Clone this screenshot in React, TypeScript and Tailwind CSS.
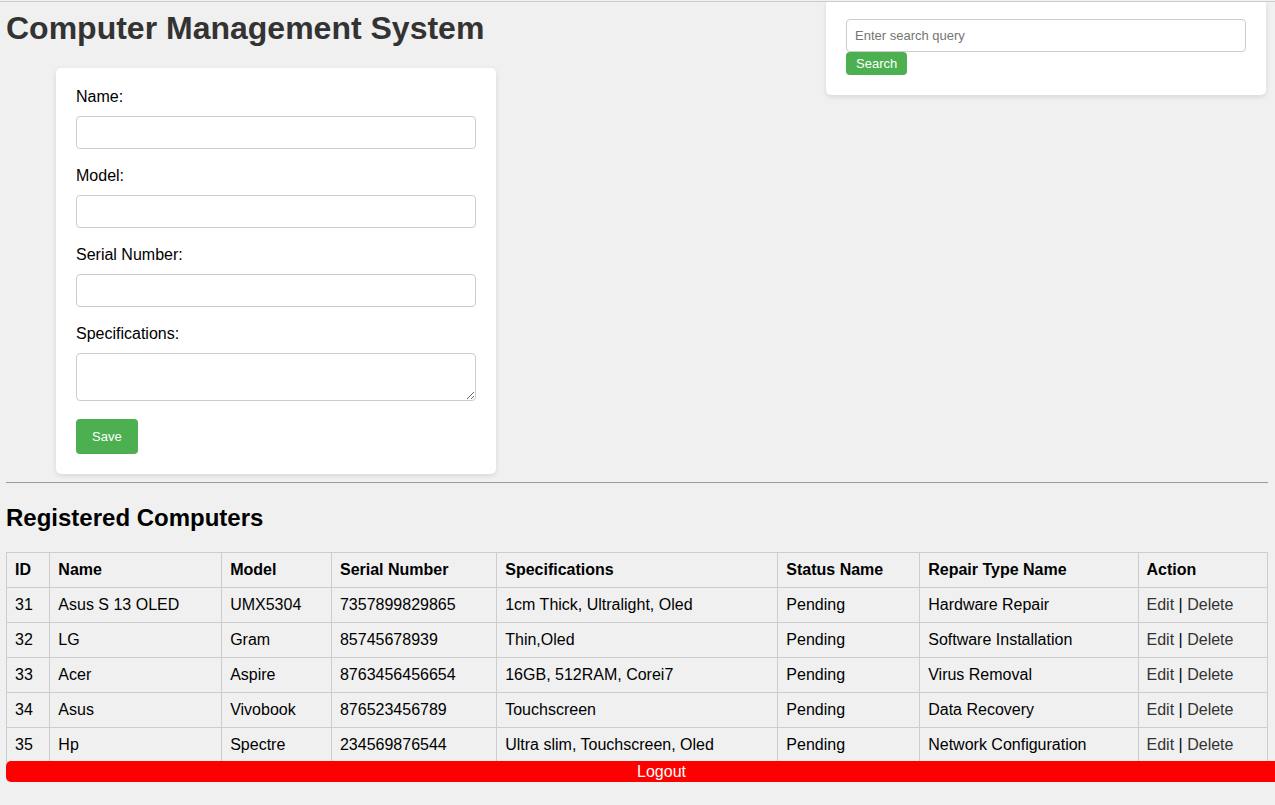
const columns = [
  "ID",
  "Name",
  "Model",
  "Serial Number",
  "Specifications",
  "Status Name",
  "Repair Type Name",
  "Action",
];

const computers = [
  ["31", "Asus S 13 OLED", "UMX5304", "7357899829865", "1cm Thick, Ultralight, Oled", "Pending", "Hardware Repair"],
  ["32", "LG", "Gram", "85745678939", "Thin,Oled", "Pending", "Software Installation"],
  ["33", "Acer", "Aspire", "8763456456654", "16GB, 512RAM, Corei7", "Pending", "Virus Removal"],
  ["34", "Asus", "Vivobook", "876523456789", "Touchscreen", "Pending", "Data Recovery"],
  ["35", "Hp", "Spectre", "234569876544", "Ultra slim, Touchscreen, Oled", "Pending", "Network Configuration"],
];

const fieldClass =
  "block h-[33px] w-full rounded-[4px] border border-[#ccc] bg-white px-2 text-[13px] text-black placeholder:text-[#757575]";

function TextField({ id, label }: { id: string; label: string }) {
  return (
    <div className="mb-[18px]">
      <label htmlFor={id} className="mb-[10px] block">
        {label}
      </label>
      <input id={id} type="text" className={fieldClass} />
    </div>
  );
}

function ComputerForm() {
  return (
    <form
      onSubmit={(e) => e.preventDefault()}
      className="ml-[50px] w-[440px] rounded-[5px] bg-white p-5 shadow-[0_2px_5px_rgba(0,0,0,0.1)]"
    >
      <TextField id="name" label="Name:" />
      <TextField id="model" label="Model:" />
      <TextField id="serial" label="Serial Number:" />
      <div className="mb-[18px]">
        <label htmlFor="specs" className="mb-[10px] block">
          Specifications:
        </label>
        <textarea
          id="specs"
          className="block h-12 w-full resize rounded-[4px] border border-[#ccc] bg-white p-2 text-[13px]"
        />
      </div>
      <button type="submit" className="block h-[35px] rounded-[4px] bg-[#4caf50] px-4 text-[13px] text-white">
        Save
      </button>
    </form>
  );
}

function SearchForm() {
  return (
    <form
      onSubmit={(e) => e.preventDefault()}
      className="w-[440px] rounded-b-[5px] bg-white px-5 pt-[17px] pb-5 shadow-[0_2px_5px_rgba(0,0,0,0.1)]"
    >
      <input type="text" aria-label="Search query" placeholder="Enter search query" className={fieldClass} />
      <button type="submit" className="block h-[23px] rounded-[4px] bg-[#4caf50] px-[10px] text-[13px] text-white">
        Search
      </button>
    </form>
  );
}

export default function App() {
  return (
    <div className="min-h-screen overflow-hidden bg-[#f0f0f0] pt-px font-['Liberation_Sans',Arial,sans-serif] text-base leading-[18px] text-black">
      <div className="overflow-hidden border-t border-[#ccc] pr-[7px] pb-6 pl-[6px]">
        <div className="flex items-start justify-between">
          <div>
            <h1 className="mt-2 mb-[22px] text-[32px] leading-9 font-bold text-[#333]">Computer Management System</h1>
            <ComputerForm />
          </div>
          <div className="pr-[2px]">
            <SearchForm />
          </div>
        </div>

        <hr className="mt-2 h-[2px] border-0 border-t border-b border-t-[#9a9a9a] border-b-[#eee]" />

        <h2 className="mt-5 mb-5 text-2xl leading-7 font-bold">Registered Computers</h2>

        <table className="w-full border-collapse text-left">
          <thead>
            <tr>
              {columns.map((c) => (
                <th key={c} scope="col" className="border border-[#ccc] p-2 font-bold">
                  {c}
                </th>
              ))}
            </tr>
          </thead>
          <tbody>
            {computers.map((row) => (
              <tr key={row[0]}>
                {row.map((cell, i) => (
                  <td key={i} className="border border-[#ccc] p-2">
                    {cell}
                  </td>
                ))}
                <td className="border border-[#ccc] p-2">
                  <a href="#edit" className="text-[#333]">
                    Edit
                  </a>
                  {" | "}
                  <a href="#delete" className="text-[#333]">
                    Delete
                  </a>
                </td>
              </tr>
            ))}
          </tbody>
        </table>

        <a
          href="#logout"
          className="relative -mt-[2px] -mr-[49px] block rounded-[5px] bg-[red] text-center leading-[21px] text-white"
        >
          Logout
        </a>
      </div>
    </div>
  );
}
